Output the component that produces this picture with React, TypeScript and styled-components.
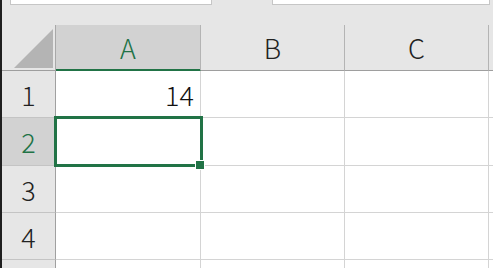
import * as React from 'react';
import styled, { createGlobalStyle } from 'styled-components';

const green = '#217346';

const GlobalStyle = createGlobalStyle`
  html, body {
    margin: 0;
    padding: 0;
    background: #e6e6e6;
  }
`;

const Frame = styled.div`
  display: flex;
  width: 493px;
  height: 268px;
  overflow: hidden;
  font-family: "Noto Sans CJK JP", "Noto Sans", sans-serif;
  font-weight: 300;
  color: #222;
`;

const LeftEdge = styled.div`
  width: 2px;
  flex-shrink: 0;
  background: #1f1f1f;
`;

const Workspace = styled.div`
  flex: 1;
  display: flex;
  flex-direction: column;
  min-width: 0;
  overflow: hidden;
`;

const FormulaStrip = styled.div`
  height: 25px;
  flex-shrink: 0;
  display: flex;
  align-items: flex-start;
  padding-left: 8px;
  gap: 60px;
  background: #e6e6e6;
`;

const InputBox = styled.div<{ $width: number }>`
  width: ${p => p.$width}px;
  height: 5px;
  box-sizing: border-box;
  background: #fff;
  border: 1px solid #c6c6c6;
  border-top: none;
`;

const Sheet = styled.div`
  display: grid;
  grid-template-columns: 54px 145px 144px 144px 1fr;
  grid-template-rows: 46px 47px 48px 47px 47px 47px;
  background: #fff;
`;

const Corner = styled.div`
  display: flex;
  justify-content: flex-end;
  align-items: flex-end;
  padding: 0 2px 2px 0;
  background: #e6e6e6;
  border-right: 1px solid #a8a8a8;
  border-bottom: 1px solid #9e9e9e;
`;

const CornerTriangle = styled.div`
  width: 39px;
  height: 39px;
  background: #b4b4b4;
  clip-path: polygon(100% 0, 100% 100%, 0 100%);
`;

const ColumnHeader = styled.div<{ $selected?: boolean }>`
  display: flex;
  align-items: center;
  justify-content: center;
  font-size: 27px;
  line-height: 1;
  background: ${p => (p.$selected ? '#d2d2d2' : '#e6e6e6')};
  color: ${p => (p.$selected ? green : '#222')};
  border-right: 1px solid #b4b4b4;
  border-bottom: 1px solid ${p => (p.$selected ? green : '#9e9e9e')};
  box-shadow: ${p => (p.$selected ? `inset 0 -1px 0 ${green}` : 'none')};
`;

const RowHeader = styled.div<{ $selected?: boolean }>`
  display: flex;
  align-items: center;
  justify-content: center;
  font-size: 27px;
  line-height: 1;
  background: ${p => (p.$selected ? '#d2d2d2' : '#e6e6e6')};
  color: ${p => (p.$selected ? green : '#222')};
  border-right: 1px solid #a0a0a0;
  border-bottom: 1px solid #c4c4c4;
`;

const Cell = styled.div<{ $align?: 'left' | 'right' }>`
  position: relative;
  display: flex;
  align-items: center;
  justify-content: ${p => (p.$align === 'right' ? 'flex-end' : 'flex-start')};
  padding: 0 6px;
  font-size: 27px;
  line-height: 1;
  color: #111;
  background: #fff;
  border-right: 1px solid #d4d4d4;
  border-bottom: 1px solid #d4d4d4;
`;

const SelectionFrame = styled.div`
  position: absolute;
  top: -2px;
  left: -2px;
  right: -3px;
  bottom: -2px;
  border: 3px solid ${green};
  z-index: 2;
`;

const FillHandle = styled.div`
  position: absolute;
  left: 138px;
  top: 41px;
  width: 8px;
  height: 8px;
  background: ${green};
  border: 1px solid #fff;
`;

const columns = ['A', 'B', 'C', ''];
// the fifth row only peeks in at the bottom edge, its number is out of view
const rows = [1, 2, 3, 4, 5];
const visibleLabels = 4;
const selected = { col: 0, row: 2 };
const values: Record<string, string> = { A1: '14' };

export default function App() {
  return (
    <>
      <GlobalStyle />
      <Frame>
        <LeftEdge />
        <Workspace>
          <FormulaStrip>
            <InputBox $width={202} />
            <InputBox $width={218} />
          </FormulaStrip>
          <Sheet>
            <Corner>
              <CornerTriangle />
            </Corner>
            {columns.map((c, i) => (
              <ColumnHeader key={`h${i}`} $selected={i === selected.col}>{c}</ColumnHeader>
            ))}
            {rows.map(r => (
              <React.Fragment key={r}>
                <RowHeader $selected={r === selected.row}>{r <= visibleLabels ? r : null}</RowHeader>
                {columns.map((c, i) => {
                  const isSel = i === selected.col && r === selected.row;
                  const v = c ? values[`${c}${r}`] : undefined;
                  return (
                    <Cell key={`${r}-${i}`} $align={v && /^\d+$/.test(v) ? 'right' : 'left'}>
                      {v}
                      {isSel && (
                        <SelectionFrame>
                          <FillHandle />
                        </SelectionFrame>
                      )}
                    </Cell>
                  );
                })}
              </React.Fragment>
            ))}
          </Sheet>
        </Workspace>
      </Frame>
    </>
  );
}
